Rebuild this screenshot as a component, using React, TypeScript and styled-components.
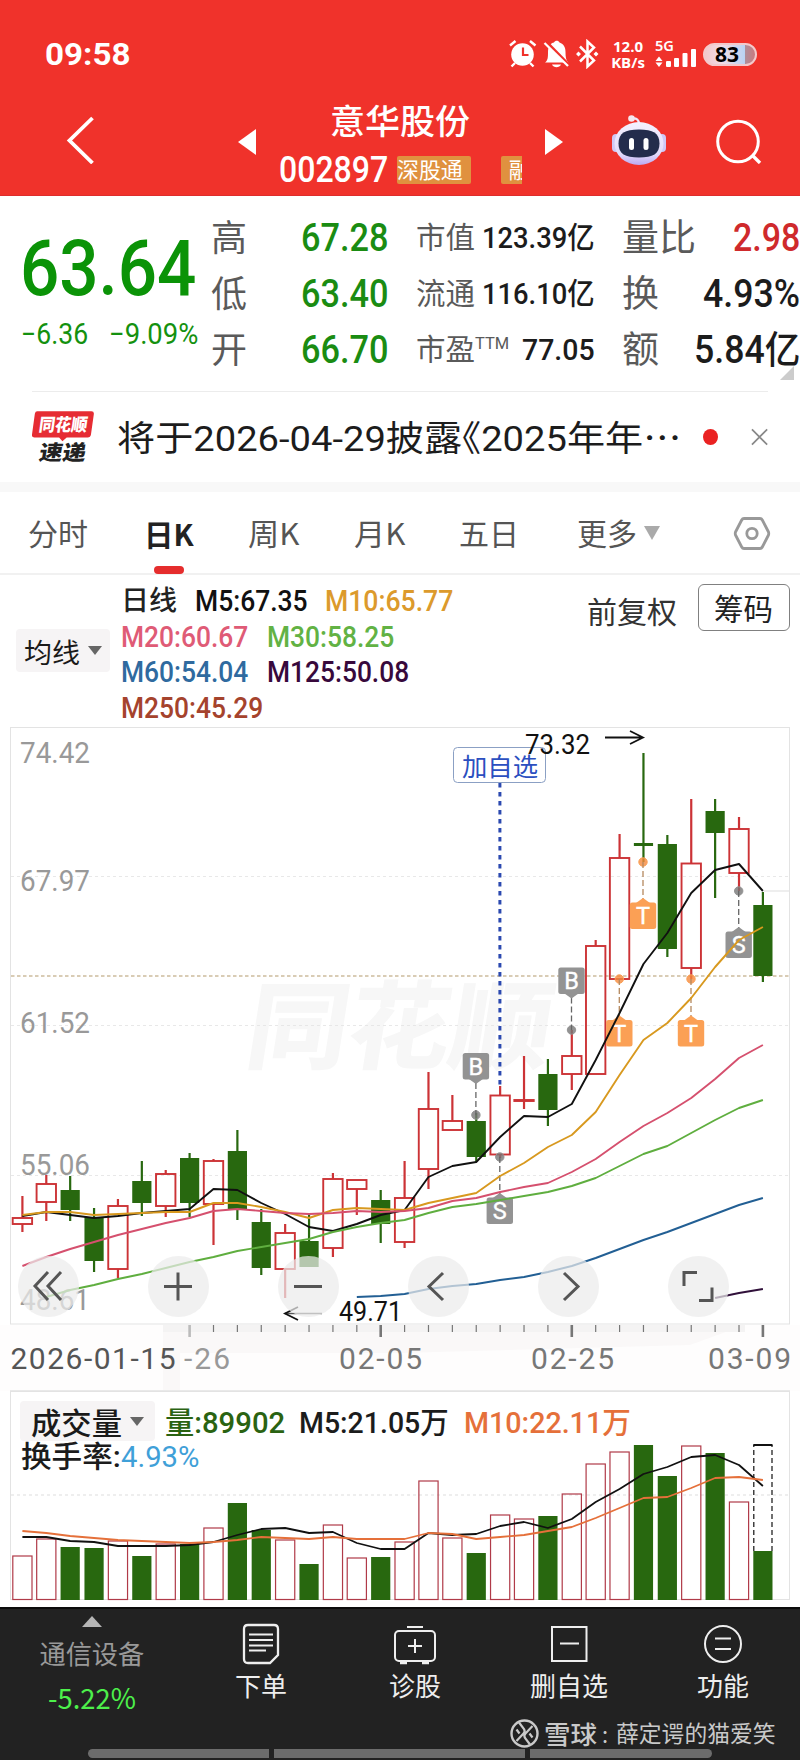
import React, { useLayoutEffect, useRef, useState } from "react";
import styled, { createGlobalStyle } from "styled-components";

const FONT = `Roboto, "Noto Sans CJK SC", sans-serif`;
const CJK = `"Noto Sans CJK SC", sans-serif`;
const RED = "#cc3336";
const GREEN = "#28680f";

const Global = createGlobalStyle`
  * { box-sizing: border-box; }
  body { margin: 0; background: #fff; font-family: ${FONT}; -webkit-font-smoothing: antialiased; }
`;

/* ---------- text fitted to a column width ---------- */

const FitBox = styled.span<{ $w: number; $gap?: number }>`
  display: block;
  flex: none;
  width: ${(p) => p.$w}px;
  margin-left: ${(p) => p.$gap || 0}px;
  white-space: nowrap;
`;
const FitText = styled.span<{ $size: number; $weight?: number; $color?: string; $lh: number; $cjk?: boolean }>`
  display: inline-block;
  vertical-align: top;
  transform-origin: 0 50%;
  font-family: ${(p) => (p.$cjk ? CJK : FONT)};
  font-size: ${(p) => p.$size}px;
  font-weight: ${(p) => p.$weight || 400};
  line-height: ${(p) => p.$lh}px;
  color: ${(p) => p.$color || "inherit"};
`;

type FitProps = {
  w: number;
  size: number;
  lh: number;
  gap?: number;
  weight?: number;
  color?: string;
  cjk?: boolean;
  children: React.ReactNode;
};
function Fit({ w, size, lh, gap, weight, color, cjk, children }: FitProps) {
  const ref = useRef<HTMLSpanElement>(null);
  const [scale, setScale] = useState(1);
  useLayoutEffect(() => {
    if (ref.current) setScale(w / ref.current.offsetWidth);
  }, [w]);
  return (
    <FitBox $w={w} $gap={gap}>
      <FitText ref={ref} $size={size} $weight={weight} $color={color} $lh={lh} $cjk={cjk} style={{ transform: `scaleX(${scale})` }}>
        {children}
      </FitText>
    </FitBox>
  );
}

/* ---------- page and header ---------- */

const Page = styled.div`
  width: 800px;
  height: 1760px;
  overflow: hidden;
  background: #fff;
  display: flex;
  flex-direction: column;
`;
const Header = styled.header`
  height: 196px;
  flex: none;
  background: #f0322b;
  border-bottom: 1px solid #dd2d2d;
  color: #fff;
`;
const StatusBar = styled.div`
  height: 96px;
  padding: 12px 43px 0 45px;
  display: flex;
  justify-content: space-between;
  align-items: center;
`;
const StatusIcons = styled.div`
  display: flex;
  align-items: center;
`;
const NetSpeed = styled.div`
  width: 36px;
  margin: 0 9px 0 11px;
  font: 700 15px/16px "Open Sans", sans-serif;
  white-space: nowrap;
  display: flex;
  flex-direction: column;
  align-items: center;
`;
const Battery = styled.div`
  width: 54px;
  height: 23px;
  margin-left: 7px;
  border: 2px solid #f3c9cb;
  border-radius: 12px;
  background: linear-gradient(90deg, #f2c8cc 0, #f1dce6 35%, #b9d3f3 80%, #b08d98 81%, #c97a80 100%);
  color: #000;
  font: 700 21px/19px "Noto Sans", sans-serif;
  text-align: center;
  padding-right: 6px;
`;
const TitleBar = styled.div`
  height: 99px;
  display: flex;
  align-items: flex-start;
`;
const BarIcon = styled.svg<{ $left: number; $top: number }>`
  flex: none;
  display: block;
  margin: ${(p) => p.$top}px 0 0 ${(p) => p.$left}px;
`;
const TitleBlock = styled.div`
  width: 243px;
  margin-left: 23px;
  padding-top: 2px;
`;
const Center = styled.div`
  padding-left: 51px;
`;
const CodeRow = styled.div`
  display: flex;
  align-items: center;
  height: 41px;
  margin-top: 9px;
`;
const Tags = styled.div`
  display: flex;
  width: 125px;
  margin-left: 9px;
  overflow: hidden;
`;
const Tag = styled.span<{ $gap?: number; $pad: number }>`
  flex: none;
  height: 28px;
  margin-left: ${(p) => p.$gap || 0}px;
  padding: 0 8px 0 ${(p) => p.$pad}px;
  background: #e0913f;
  border-radius: 2px;
  font: 400 21.9px/25px ${CJK};
`;

/* ---------- quote board ---------- */

const Board = styled.section`
  flex: none;
  height: 195px;
  padding-top: 13px;
  display: flex;
  position: relative;
`;
const PriceCol = styled.div`
  width: 211px;
  flex: none;
  padding: 18px 0 0 20px;
`;
const ChangeRow = styled.div`
  display: flex;
  padding-left: 1px;
  margin-top: 3px;
`;
const StatCol = styled.div<{ $w: number; $gap?: number }>`
  flex: none;
  width: ${(p) => p.$w}px;
  margin-left: ${(p) => p.$gap || 0}px;
`;
const StatRow = styled.div`
  height: 56px;
  display: flex;
  justify-content: space-between;
`;
const StatName = styled.span<{ $size: number }>`
  font: 400 ${(p) => p.$size}px/52px ${CJK};
  color: #5a5a5a;
  white-space: nowrap;
  sup {
    font: 400 16.5px/16px ${FONT};
    vertical-align: 11px;
  }
`;
const Corner = styled.svg`
  position: absolute;
  right: 6px;
  bottom: 11px;
`;

/* ---------- notice ---------- */

const Notice = styled.section`
  flex: none;
  height: 91px;
  margin: 0 32px;
  border-top: 1px solid #ececec;
  display: flex;
  align-items: center;
`;
const NoticeText = styled.div`
  padding-top: 3px;
`;
const HalfWidth = styled.span`
  font-feature-settings: "halt" 1;
`;
const Dot = styled.span`
  width: 16px;
  height: 16px;
  margin: 0 33px 0 22px;
  border-radius: 50%;
  background: #ea2222;
`;
const Band = styled.div`
  flex: none;
  height: 10px;
  background: #f8f8f8;
`;

/* ---------- tabs ---------- */

const Tabs = styled.nav`
  flex: none;
  height: 83px;
  padding-left: 28px;
  border-bottom: 2px solid #f1f1f1;
  display: flex;
  align-items: flex-start;
`;
const Tab = styled.div<{ $gap?: number }>`
  height: 83px;
  margin-left: ${(p) => p.$gap || 0}px;
  padding-top: 12px;
  display: flex;
  flex-direction: column;
  align-items: center;
`;
const Underline = styled.i`
  width: 30px;
  height: 8px;
  margin-top: 4px;
  border-radius: 4px;
  background: #e52d2d;
`;

/* ---------- averages legend ---------- */

const Legend = styled.section`
  flex: none;
  height: 152px;
  padding-left: 16px;
  display: flex;
  align-items: flex-start;
`;
const Selector = styled.div<{ $w: number; $h: number; $top: number; $pad: number }>`
  flex: none;
  width: ${(p) => p.$w}px;
  height: ${(p) => p.$h}px;
  margin-top: ${(p) => p.$top}px;
  padding-left: ${(p) => p.$pad}px;
  display: flex;
  align-items: center;
  border-radius: 4px;
  background: #f6f4f5;
  color: #1a1a1a;
`;
const Averages = styled.div`
  width: 466px;
  padding: 8px 0 0 11px;
`;
const AvgRow = styled.div`
  display: flex;
  height: 35.6px;
`;
const ChipButton = styled.div`
  width: 92px;
  height: 47px;
  margin: 9px 0 0 21px;
  border: 1px solid #808080;
  border-radius: 6px;
  padding-left: 15px;
`;

/* ---------- charts ---------- */

const ChartArea = styled.section`
  flex: none;
  position: relative;
  height: 664px;
`;
const VolumeArea = styled.section`
  flex: none;
  position: relative;
  height: 216px;
`;
const Plot = styled.svg`
  display: block;
  text {
    font-family: ${FONT};
  }
`;
const Controls = styled.div`
  position: absolute;
  left: 18px;
  top: 529px;
  display: flex;
  gap: 69.4px;
`;
const RoundButton = styled.button`
  width: 60.6px;
  height: 60.6px;
  padding: 0;
  border: 0;
  border-radius: 50%;
  background: rgba(235, 235, 235, 0.72);
  svg {
    display: block;
  }
`;
const VolumeLegend = styled.div`
  position: absolute;
  left: 20px;
  top: 10px;
`;
const VolRow = styled.div<{ $up?: number }>`
  display: flex;
  align-items: flex-start;
  margin-top: ${(p) => -(p.$up || 0)}px;
`;

/* ---------- bottom bar ---------- */

const Bottom = styled.footer`
  flex: none;
  height: 153px;
  position: relative;
  background: #222;
  border-top: 2px solid #0c0c0c;
  color: #eee;
  display: flex;
`;
const Item = styled.div<{ $w: number }>`
  width: ${(p) => p.$w}px;
  flex: none;
  display: flex;
  flex-direction: column;
  align-items: center;
  padding-top: 13px;
  font: 400 26px/38px ${CJK};
`;
const Sector = styled.div`
  width: 184px;
  flex: none;
  display: flex;
  flex-direction: column;
  align-items: center;
  padding-top: 7px;
  color: #999;
`;
const Signature = styled.div`
  position: absolute;
  left: 510px;
  top: 108px;
  display: flex;
  align-items: center;
  color: #c9c9c9;
`;
const Slider = styled.div`
  position: absolute;
  left: 88px;
  bottom: 2px;
  width: 624px;
  height: 9px;
  display: flex;
  gap: 5px;
`;
const Segment = styled.i<{ $w: number; $r: string }>`
  width: ${(p) => p.$w}px;
  background: #6c6c6c;
  border-radius: ${(p) => p.$r};
`;

/* ---------- chart data ---------- */

const X = (i: number) => 22.4 + 23.887 * i;

// [rising, body top, body bottom, high, low]
const candles: [number, number, number, number, number][] = [
  [1, 1218, 1224, 1196, 1232], [1, 1184, 1202, 1175, 1221], [0, 1190, 1210, 1176, 1221], [0, 1217, 1261, 1208, 1272],
  [1, 1206, 1269, 1199, 1278], [0, 1181, 1203, 1161, 1216], [1, 1174, 1206, 1170, 1217], [0, 1158, 1203, 1153, 1217],
  [1, 1161, 1204, 1159, 1245], [0, 1151, 1209, 1130, 1220], [0, 1222, 1268, 1209, 1275], [1, 1233, 1269, 1224, 1298],
  [0, 1241, 1267, 1215, 1267], [1, 1179, 1248, 1173, 1257], [1, 1180, 1189, 1180, 1215], [0, 1200, 1224, 1190, 1243],
  [1, 1198, 1242, 1161, 1248], [1, 1109, 1169, 1072, 1189], [1, 1121, 1130, 1095, 1130], [0, 1121, 1157, 1113, 1162],
  [1, 1095.5, 1154.5, 1086, 1158], [1, 1100, 1101, 1056, 1109], [0, 1074, 1110, 1059, 1126], [1, 1056, 1074, 1030, 1090],
  [1, 946, 1074, 940, 1074], [1, 858, 979, 834, 979], [0, 843, 846, 753, 862], [0, 844, 949, 835, 957],
  [1, 863.5, 968, 799, 979], [0, 811, 833, 799, 898], [1, 829, 873, 817, 891], [0, 905, 976, 892, 982],
];

const averages: { color: string; from: number; ys: number[] }[] = [
  { color: "#111", from: 0, ys: [1216, 1212, 1215, 1218, 1216, 1213, 1211, 1209, 1189, 1190, 1203, 1214, 1227, 1231, 1224, 1215, 1210, 1177, 1166, 1162, 1137, 1116, 1117, 1104, 1060, 1013, 964, 933, 893, 870, 864, 891] },
  { color: "#d8991f", from: 0, ys: [1215, 1212, 1212, 1215, 1214, 1213, 1212, 1212, 1203, 1203, 1207, 1212, 1218, 1210, 1208, 1209, 1210, 1203, 1198, 1193, 1176, 1163, 1147, 1135, 1112, 1075, 1040, 1023, 998, 967, 940, 927] },
  { color: "#d5506e", from: 0, ys: [1266, 1257, 1249, 1242, 1235, 1229, 1223, 1218, 1211, 1209, 1211, 1213, 1214, 1213, 1211, 1212, 1211, 1208, 1201, 1198, 1192, 1187, 1183, 1172, 1159, 1142, 1126, 1113, 1098, 1079, 1058, 1045] },
  { color: "#5fae3f", from: 1, ys: [1297, 1290, 1285, 1279, 1274, 1268, 1262, 1257, 1251, 1247, 1243, 1239, 1232, 1227, 1223, 1220, 1213, 1207, 1204, 1200, 1196, 1192, 1186, 1178, 1166, 1154, 1146, 1133, 1120, 1108, 1100] },
  { color: "#225f94", from: 14, ys: [1297, 1296, 1294, 1289, 1286, 1284, 1280, 1277, 1272, 1266, 1258, 1249, 1240, 1232, 1223, 1214, 1205, 1198] },
  { color: "#30103a", from: 29, ys: [1298, 1293, 1289] },
];

const volumes: [number, number][] = [
  [1, 1556], [1, 1539], [0, 1547], [0, 1548], [1, 1541], [0, 1556], [1, 1544], [0, 1544], [1, 1528], [0, 1503], [0, 1530],
  [1, 1540], [0, 1564], [1, 1525], [1, 1558], [0, 1557], [1, 1542], [1, 1481], [1, 1538], [0, 1553], [1, 1515], [1, 1519],
  [0, 1516], [1, 1494], [1, 1464], [1, 1452], [0, 1445], [0, 1476], [1, 1446], [0, 1453], [1, 1502], [0, 1551],
];
const volumeAverages = [
  { color: "#111", ys: [1537, 1537, 1541, 1542, 1546, 1546, 1546, 1545, 1542, 1535, 1529, 1528, 1533, 1532, 1543, 1549, 1549, 1533, 1535, 1534, 1526, 1522, 1528, 1519, 1502, 1489, 1474, 1467, 1457, 1455, 1465, 1486] },
  { color: "#e5703a", ys: [1531, 1533, 1536, 1538, 1540, 1541, 1542, 1543, 1542, 1540, 1537, 1538, 1539, 1537, 1539, 1539, 1539, 1533, 1534, 1539, 1537, 1535, 1531, 1527, 1518, 1508, 1498, 1497, 1488, 1478, 1477, 1480] },
];

const points = (from: number, ys: number[]) => ys.map((y, k) => `${X(from + k)},${y}`).join(" ");

const marks = [
  { x: 643, y: 902.5, dot: 862, t: "T", down: false },
  { x: 619.3, y: 1020, dot: 979, t: "T", down: false },
  { x: 691, y: 1020, dot: 979, t: "T", down: false },
  { x: 738.7, y: 931.5, dot: 891, t: "S", down: false },
  { x: 571.5, y: 967.5, dot: 1030, t: "B", down: true },
  { x: 475.9, y: 1053, dot: 1115, t: "B", down: true },
  { x: 499.8, y: 1197.5, dot: 1157, t: "S", down: false },
];

function Mark({ x, y, dot, t, down }: (typeof marks)[number]) {
  const fill = t === "T" ? "#fba055" : "#939393";
  const line = t === "T" ? "#b5895f" : "#666";
  return (
    <g>
      <circle cx={x} cy={dot} r="4.2" fill={t === "T" ? "#f58a3c" : "#777"} fillOpacity=".8" stroke={fill} />
      <path d={down ? `M${x} ${y + 30}V${dot}` : `M${x} ${dot}V${y - 3}`} stroke={line} strokeWidth="1.3" strokeDasharray="6 3" />
      <rect x={x - 13.2} y={y} width="26.4" height="26.4" rx="2.5" fill={fill} />
      <path d={down ? `M${x - 7} ${y + 26}h14l-7 5z` : `M${x - 7} ${y + 0.4}h14l-7 -5z`} fill={fill} />
      <text x={x} y={y + 21.5} fontSize="23.5" fill="#fff" stroke="#fff" strokeWidth=".4" textAnchor="middle">{t}</text>
    </g>
  );
}

const axisLabels: [string, number][] = [["74.42", 763], ["67.97", 891], ["61.52", 1033], ["55.06", 1175], ["48.61", 1310]];
const dates: [string, number, number, string][] = [
  ["2026-01-15", 10.5, 165, "#555"], ["-26", 184, 46, "#999"], ["02-05", 339, 83, "#777"], ["02-25", 531, 83, "#777"], ["03-09", 708, 83, "#777"],
];

function CandleChart() {
  return (
    <Plot width="800" height="664" viewBox="0 727 800 664" fill="none">
      <rect x="0" y="1325" width="800" height="66" fill="#fefdfd" />
      <path d="M163 1325H745L690 1345L400 1353H180V1391H163Z" fill="#faf8f8" />
      <path d="M163 1325H745V1332H163Z" fill="#f4f3f3" />
      <rect x="10.5" y="727.5" width="779" height="596.5" fill="#fff" stroke="#e3e3e3" />
      <text transform="translate(243 1061) skewX(-9)" fontSize="95" fontWeight="700" textLength="304" lengthAdjust="spacingAndGlyphs" fill="#f7f7f7" stroke="#f7f7f7" strokeWidth="1.5">同花顺</text>
      {[876, 1025, 1175].map((y) => (
        <path key={y} d={`M11 ${y}.5H789`} stroke="#e2e2e2" strokeDasharray="3 3" strokeWidth=".8" />
      ))}
      <path d="M764 891H789" stroke="#ddd" />
      {axisLabels.map(([t, y]) => (
        <text key={t} x="20" y={y} fontSize="30" textLength="70" lengthAdjust="spacingAndGlyphs" fill="#999">{t}</text>
      ))}
      <path d="M11 976H789" stroke="#b39a6c" strokeWidth="1.2" strokeDasharray="3.5 2.5" />
      <path d="M499.9 783V1086" stroke="#2b49b0" strokeWidth="3" strokeDasharray="4.5 4.5" />
      {candles.map(([up, top, bottom, high, low], i) => {
        const x = X(i);
        const c = up ? RED : GREEN;
        return (
          <g key={i}>
            <path d={`M${x} ${high}V${top}M${x} ${bottom}V${low}`} stroke={c} strokeWidth="2.2" />
            {up ? (
              <rect x={x - 9.7} y={top} width="19.4" height={bottom - top} stroke={c} strokeWidth="1.9" />
            ) : (
              <rect x={x - 9.6} y={top} width="19.2" height={bottom - top} fill={c} />
            )}
          </g>
        );
      })}
      {marks.map((m, i) => <Mark key={i} {...m} />)}
      {averages.map((a) => (
        <polyline key={a.color} points={points(a.from, a.ys)} stroke={a.color} strokeWidth="1.9" strokeLinejoin="round" />
      ))}
      <rect x="453.5" y="747.5" width="92" height="35" rx="4" fill="#fff" stroke="#8ba0c4" />
      <text x="462" y="775.500" fontSize="24.6" textLength="76" lengthAdjust="spacingAndGlyphs" fill="#2b4fc0">加自选</text>
      <text x="525" y="753.5" fontSize="27" textLength="65" lengthAdjust="spacingAndGlyphs" fill="#111">73.32</text>
      <path d="M605 737.5H643M630 731l13 6.5-13 6.5" stroke="#111" strokeWidth="1.8" />
      <text x="339" y="1320.500" fontSize="27" textLength="63" lengthAdjust="spacingAndGlyphs" fill="#111">49.71</text>
      <path d="M322 1313.500H285" stroke="#555" strokeWidth="1.4" />
      <path d="M298 1307l-13 6.500 13 6.500" stroke="#111" strokeWidth="1.8" />
      {Array.from({ length: 25 }, (_, k) => k + 7).map((i) => {
        const big = (i - 7) % 8 === 0;
        return <path key={i} d={`M${X(i)} 1325V${big ? 1337 : 1332}`} stroke={i === 7 ? "#bbb" : "#777"} strokeWidth={big ? 2.6 : 1.2} />;
      })}
      {dates.map(([t, x, w, c]) => (
        <text key={t} x={x} y="1369" fontSize="30" textLength={w} fill={c}>{t}</text>
      ))}
      <path d="M10 1390.5H790" stroke="#e9e9e9" />
    </Plot>
  );
}

function VolumeChart() {
  return (
    <Plot width="800" height="216" viewBox="0 1391 800 216" fill="none">
      <rect x="10.5" y="1391.500" width="779" height="208" stroke="#e3e3e3" />
      <path d="M11 1495H789" stroke="#ddd" strokeDasharray="3 3" />
      {volumes.map(([up, top], i) =>
        up ? (
          <rect key={i} x={X(i) - 9.6} y={top} width="19.2" height={1599.5 - top} stroke="#b03a48" strokeWidth="1.2" />
        ) : (
          <rect key={i} x={X(i) - 9.6} y={top} width="19.2" height={1600 - top} fill={GREEN} />
        )
      )}
      <path d="M753.8 1551V1445M772 1551V1445" stroke="#111" strokeWidth="1.2" strokeDasharray="5 3" />
      <path d="M753.3 1445H772.5" stroke="#111" strokeWidth="2" />
      {volumeAverages.map((a) => (
        <polyline key={a.color} points={points(0, a.ys)} stroke={a.color} strokeWidth="1.8" strokeLinejoin="round" />
      ))}
    </Plot>
  );
}

/* ---------- icons ---------- */

const Caret = ({ w = 14, h = 9, gap = 8, color = "#666" }) => (
  <svg width={w + gap} height={h} viewBox={`${-gap} 0 ${w + gap} ${h}`}>
    <path d={`M0 0H${w}L${w / 2} ${h}Z`} fill={color} />
  </svg>
);

const StatusGlyphs = () => (
  <svg width="90" height="30" viewBox="508 39 90 30" fill="none">
    <circle cx="521.5" cy="54.5" r="11.3" fill="#fff" />
    <path d="M522 47.500V55H527.500" stroke="#f0322b" strokeWidth="2.2" />
    <path d="M509 45.500L514.500 41M534.500 45.500L529 41M514 63L510.500 66.500M529 63L532.500 66.500" stroke="#fff" strokeWidth="2.4" />
    <path d="M544 62.500C547 60.500 547 57 547 52C547 46 550 43 553 42.500C554 40 557.500 40 558.500 42.500C563 44 564.500 47.500 564.500 52C564.500 57 565 60.500 567.500 62.500Z M551 64.500H560C558.500 68 552.500 68 551 64.500Z" fill="#fff" />
    <path d="M545 41.500L569 66" stroke="#f0322b" strokeWidth="3" />
    <path d="M543.500 43L567 66" stroke="#fff" strokeWidth="2.3" />
    <path d="M579 46.500L593 60.500L586.500 66.500V41.500L593 47.500L579 61.500" stroke="#fff" strokeWidth="2.5" />
    <path d="M575 54l2.500-2.500L580 54l-2.500 2.500zM592.500 54l2.500-2.500 2.500 2.500-2.500 2.500z" fill="#fff" />
  </svg>
);

const Signal = () => (
  <svg width="41" height="30" viewBox="654 40 41 30" fill="#fff">
    <text x="654" y="52" fontSize="14.500" fontWeight="600" fontFamily="Noto Sans" textLength="19" lengthAdjust="spacingAndGlyphs">5G</text>
    <path d="M654.500 62l3.500-4.500 3.500 4.500zM654.500 63.500l3.500 4.500 3.500-4.500z" />
    <rect x="665" y="62" width="5" height="6" rx="1" />
    <rect x="673" y="59" width="5" height="9" rx="1" />
    <rect x="681.500" y="54" width="5" height="14" rx="1" />
    <rect x="690" y="50" width="5" height="18" rx="1" />
  </svg>
);

const Robot = () => (
  <BarIcon $left={48} $top={18} width="56" height="52" viewBox="610 114 56 52" fill="none">
    <defs>
      <linearGradient id="shell" x1="0" y1="0" x2="0" y2="1">
        <stop offset="0" stopColor="#f4f1ff" />
        <stop offset=".75" stopColor="#e2daf9" />
        <stop offset="1" stopColor="#bba8f2" />
      </linearGradient>
    </defs>
    <path d="M631 118.500C636 118 638 120 638 124" stroke="#eee8fb" strokeWidth="2.200" />
    <circle cx="630.500" cy="118.500" r="3.300" fill="#f5e6ee" />
    <rect x="611" y="134" width="8" height="18" rx="4" fill="#cfc8f6" />
    <rect x="657" y="134" width="8" height="18" rx="4" fill="#cfc8f6" />
    <ellipse cx="638" cy="143.500" rx="24.500" ry="21.500" fill="url(#shell)" />
    <path d="M638 129.500C652 129.500 658.500 133 658.500 143.500C658.500 154 652 157.500 638 157.500C624 157.500 617.500 154 617.500 143.500C617.500 133 624 129.500 638 129.500Z" fill="#232c4c" />
    <rect x="628" y="138" width="5" height="12" rx="2.500" fill="#fff" />
    <rect x="642.500" y="138" width="5" height="12" rx="2.500" fill="#fff" />
  </BarIcon>
);

const BrandBadge = () => (
  <svg width="68" height="56" viewBox="31.500 408.500 68 56">
    <path d="M37 409.500H94Q97 409.500 96.500 412.500L93.500 434Q93 437 90 437H68L63.500 441L60 437H34Q31 437 31.500 434L34.500 412Q35 409.500 37 409.500Z" fill="#e62c33" />
    <text transform="translate(38 430.500) skewX(-8)" fontFamily="Noto Sans CJK SC" fontSize="18.500" fontWeight="900" textLength="51" lengthAdjust="spacingAndGlyphs" fill="#fff">同花顺</text>
    <text transform="translate(38 460.500) skewX(-10)" fontFamily="Noto Sans CJK SC" fontSize="22" fontWeight="900" textLength="49" lengthAdjust="spacingAndGlyphs" fill="#222">速递</text>
  </svg>
);

const controlPaths = [
  "M30 16L17 30L30 44M43 16L30 30L43 44",
  "M16 30.500H44M30 16.500V44.500",
  "M16 30.500H44",
  "M35 17L21 30.500L35 44",
  "M26 17L40 30.500L26 44",
  "M16 30V16.500H29M44 31.500V44.500H31",
];

/* ---------- app ---------- */

export default function App() {
  return (
    <Page>
      <Global />
      <Header>
        <StatusBar>
          <Fit w={85} size={32} lh={40} weight={700}>09:58</Fit>
          <StatusIcons>
            <StatusGlyphs />
            <NetSpeed><span>12.0</span><span>KB/s</span></NetSpeed>
            <Signal />
            <Battery>83</Battery>
          </StatusIcons>
        </StatusBar>
        <TitleBar>
          <BarIcon $left={66} $top={20} width="30" height="48" viewBox="66 116 30 48" fill="none">
            <path d="M92.500 118L69.500 140.500L92.500 163" stroke="#fff" strokeWidth="3.800" />
          </BarIcon>
          <BarIcon $left={142} $top={33} width="18" height="26"><path d="M18 0V26L0 13Z" fill="#fff" /></BarIcon>
          <TitleBlock>
            <Center><Fit w={140} size={34.5} lh={42} weight={500} cjk>意华股份</Fit></Center>
            <CodeRow>
              <Fit w={109} size={37} lh={40} weight={500}>002897</Fit>
              <Tags>
                <Tag $pad={0}>深股通</Tag>
                <Tag $gap={30} $pad={8}>融</Tag>
              </Tags>
            </CodeRow>
          </TitleBlock>
          <BarIcon $left={23} $top={33} width="18" height="26"><path d="M0 0V26L18 13Z" fill="#fff" /></BarIcon>
          <Robot />
          <BarIcon $left={48} $top={22} width="48" height="46" viewBox="714 118 48 46" fill="none">
            <circle cx="737" cy="141.500" r="20.300" stroke="#fff" strokeWidth="3" />
            <path d="M751.500 155.500L759 163" stroke="#fff" strokeWidth="3.300" />
          </BarIcon>
        </TitleBar>
      </Header>

      <Board>
        <PriceCol>
          <Fit w={176} size={77} lh={84} weight={500} color="#0b9307">63.64</Fit>
          <ChangeRow>
            <Fit w={67} size={29} lh={41} color="#14910f">−6.36</Fit>
            <Fit w={89} size={29} lh={41} gap={21} color="#14910f">−9.09%</Fit>
          </ChangeRow>
        </PriceCol>
        <StatCol $w={178}>
          {[["高", "67.28"], ["低", "63.40"], ["开", "66.70"]].map(([k, v]) => (
            <StatRow key={k}>
              <StatName $size={36}>{k}</StatName>
              <Fit w={88} size={39} lh={58} weight={500} color="#1a8c12">{v}</Fit>
            </StatRow>
          ))}
        </StatCol>
        <StatCol $w={179} $gap={27}>
          <StatRow><StatName $size={29.5}>市值</StatName><Fit w={113} size={30} lh={57} weight={500} color="#1c1c1c">123.39亿</Fit></StatRow>
          <StatRow><StatName $size={29.5}>流通</StatName><Fit w={113} size={30} lh={57} weight={500} color="#1c1c1c">116.10亿</Fit></StatRow>
          <StatRow><StatName $size={29.5}>市盈<sup>TTM</sup></StatName><Fit w={73} size={30} lh={57} weight={500} color="#1c1c1c">77.05</Fit></StatRow>
        </StatCol>
        <StatCol $w={178} $gap={27}>
          <StatRow><StatName $size={37}>量比</StatName><Fit w={67} size={39} lh={58} weight={500} color="#cf2a2c">2.98</Fit></StatRow>
          <StatRow><StatName $size={37}>换</StatName><Fit w={97} size={39} lh={58} weight={500} color="#1c1c1c">4.93%</Fit></StatRow>
          <StatRow><StatName $size={37}>额</StatName><Fit w={106} size={38} lh={58} weight={500} color="#1c1c1c">5.84亿</Fit></StatRow>
        </StatCol>
        <Corner width="14" height="14"><path d="M14 0V14H0Z" fill="#ccc" /></Corner>
      </Board>

      <Notice>
        <BrandBadge />
        <NoticeText>
          <Fit w={564} size={35.5} lh={50} gap={20} color="#1c1c1c">
            将于2026-04-29披露<HalfWidth>《</HalfWidth>2025年年⋯
          </Fit>
        </NoticeText>
        <Dot />
        <svg width="18" height="18" viewBox="0 0 18 18"><path d="M1 1L17 17M17 1L1 17" stroke="#888" strokeWidth="1.800" /></svg>
      </Notice>
      <Band />

      <Tabs>
        <Tab><Fit w={60} size={30} lh={57} cjk color="#555">分时</Fit></Tab>
        <Tab $gap={56}>
          <Fit w={50} size={30} lh={58} cjk weight={700} color="#222">日K</Fit>
          <Underline />
        </Tab>
        <Tab $gap={54}><Fit w={51} size={30} lh={57} cjk color="#555">周K</Fit></Tab>
        <Tab $gap={55}><Fit w={51} size={30} lh={57} cjk color="#555">月K</Fit></Tab>
        <Tab $gap={54}><Fit w={60} size={30} lh={57} cjk color="#555">五日</Fit></Tab>
        <Tab $gap={58}><Fit w={60} size={30} lh={57} cjk color="#555">更多</Fit></Tab>
        <BarIcon $left={7} $top={34} width="16" height="14"><path d="M0 0H16L8 14Z" fill="#aaa" /></BarIcon>
        <BarIcon $left={73} $top={24} width="38" height="36" viewBox="733 516 38 36" fill="none" stroke="#999" strokeWidth="2.800" strokeLinejoin="round">
          <path d="M744 518.500H760Q761.500 518.500 762.300 520L768.500 532Q769 533.500 768.500 535L762.300 547Q761.500 548.500 760 548.500H744Q742.500 548.500 741.700 547L735.500 535Q735 533.500 735.500 532L741.700 520Q742.500 518.500 744 518.500Z" />
          <circle cx="752" cy="533.500" r="5.200" />
        </BarIcon>
      </Tabs>

      <Legend>
        <Selector $w={94} $h={43} $top={54} $pad={8}>
          <Fit w={56} size={27.5} lh={40} cjk>均线</Fit>
          <Caret />
        </Selector>
        <Averages>
          <AvgRow>
            <Fit w={56} size={27.5} lh={35} weight={500} color="#222">日线</Fit>
            <Fit w={113} size={29.5} lh={36} gap={18} weight={500} color="#111">M5:67.35</Fit>
            <Fit w={128} size={29.5} lh={36} gap={17} weight={500} color="#dc9a2c">M10:65.77</Fit>
          </AvgRow>
          <AvgRow>
            <Fit w={127} size={29.5} lh={36} weight={500} color="#df5b76">M20:60.67</Fit>
            <Fit w={127} size={29.5} lh={36} gap={19} weight={500} color="#62b244">M30:58.25</Fit>
          </AvgRow>
          <AvgRow>
            <Fit w={127} size={29.5} lh={36} weight={500} color="#2f6a9f">M60:54.04</Fit>
            <Fit w={142} size={29.5} lh={36} gap={19} weight={500} color="#38093c">M125:50.08</Fit>
          </AvgRow>
          <AvgRow>
            <Fit w={142} size={29.5} lh={36} weight={500} color="#a5432d">M250:45.29</Fit>
          </AvgRow>
        </Averages>
        <Fit w={90} size={30} lh={70} gap={11} cjk color="#333">前复权</Fit>
        <ChipButton><Fit w={59} size={29.500} lh={45} cjk color="#222">筹码</Fit></ChipButton>
      </Legend>

      <ChartArea>
        <CandleChart />
        <Controls>
          {controlPaths.map((d) => (
            <RoundButton key={d}>
              <svg width="60" height="60" viewBox="0 0 60 60" fill="none" stroke="#555" strokeWidth="3"><path d={d} /></svg>
            </RoundButton>
          ))}
        </Controls>
      </ChartArea>

      <VolumeArea>
        <VolumeChart />
        <VolumeLegend>
          <VolRow>
            <Selector $w={135} $h={40} $top={0} $pad={11}>
              <Fit w={91} size={30} lh={36} cjk weight={500}>成交量</Fit>
              <Caret />
            </Selector>
            <Fit w={120} size={30} lh={43} gap={10} weight={500} color="#2a6312">量:89902</Fit>
            <Fit w={150} size={30} lh={43} gap={14} weight={500} color="#1c1c1c">M5:21.05万</Fit>
            <Fit w={167} size={30} lh={43} gap={15} weight={500} color="#e5703a">M10:22.11万</Fit>
          </VolRow>
          <VolRow $up={3}>
            <Fit w={100} size={30} lh={32} gap={1} weight={500} color="#1c1c1c">换手率:</Fit>
            <Fit w={78} size={30} lh={32} color="#3fa0d8">4.93%</Fit>
          </VolRow>
        </VolumeLegend>
      </VolumeArea>

      <Bottom>
        <Sector>
          <svg width="20" height="11"><path d="M0 11H20L10 0Z" fill="#b5b5b5" /></svg>
          <Fit w={105} size={26.200} lh={52} cjk>通信设备</Fit>
          <Fit w={88} size={28} lh={36} cjk color="#4df04b">-5.22%</Fit>
        </Sector>
        <Item $w={154}>
          <svg width="38" height="44" viewBox="242 1622 38 44" fill="none" stroke="#eee" strokeWidth="2">
            <path d="M248 1625H274Q278 1625 278 1629V1655L270 1663H248Q244 1663 244 1659V1629Q244 1625 248 1625Z" strokeWidth="2.300" />
            <path d="M249 1634.500H273M249 1640H273M249 1645.500H273M249 1650.500H266" />
          </svg>
          下单
        </Item>
        <Item $w={154}>
          <svg width="44" height="44" viewBox="393 1622 44 44" fill="none" stroke="#eee" strokeWidth="2">
            <rect x="395" y="1631" width="40" height="30" rx="4" />
            <path d="M407 1627H423M415 1639V1653M408 1646H422" />
            <path d="M400 1663H407M422 1663H429" strokeWidth="2.500" />
          </svg>
          诊股
        </Item>
        <Item $w={154}>
          <svg width="38" height="44" viewBox="549 1622 38 44" fill="none" stroke="#eee" strokeWidth="2">
            <rect x="551" y="1627" width="34.500" height="34" />
            <path d="M559 1643.500H578" />
          </svg>
          删自选
        </Item>
        <Item $w={154}>
          <svg width="40" height="44" viewBox="703 1622 40 44" fill="none" stroke="#eee" strokeWidth="2">
            <circle cx="723" cy="1644" r="18" />
            <path d="M715 1638.500H731M715 1649H731" />
          </svg>
          功能
        </Item>
        <Slider>
          <Segment $w={181} $r="5px 0 0 5px" />
          <Segment $w={251} $r="0" />
          <Segment $w={182} $r="0 5px 5px 0" />
        </Slider>
        <Signature>
          <svg width="29" height="29" viewBox="-14.500 -14.500 29 29" fill="none" stroke="#c9c9c9">
            <circle r="13" strokeWidth="2.400" />
            <path d="M-5.500 -11L-0.500 -4.500Q1 -2 -1 0L-8 7.500M5.500 11L0.500 4.500Q-1 2 1 0L8 -7.500M-8 -4L-5 0M8 4L5 0" strokeWidth="2.200" />
          </svg>
          <Fit w={53} size={25} lh={32} gap={5} cjk weight={500}>雪球</Fit>
          <Fit w={6} size={22} lh={30} gap={5} cjk>:</Fit>
          <Fit w={160} size={22.800} lh={32} gap={8} cjk>薛定谔的猫爱笑</Fit>
        </Signature>
      </Bottom>
    </Page>
  );
}
